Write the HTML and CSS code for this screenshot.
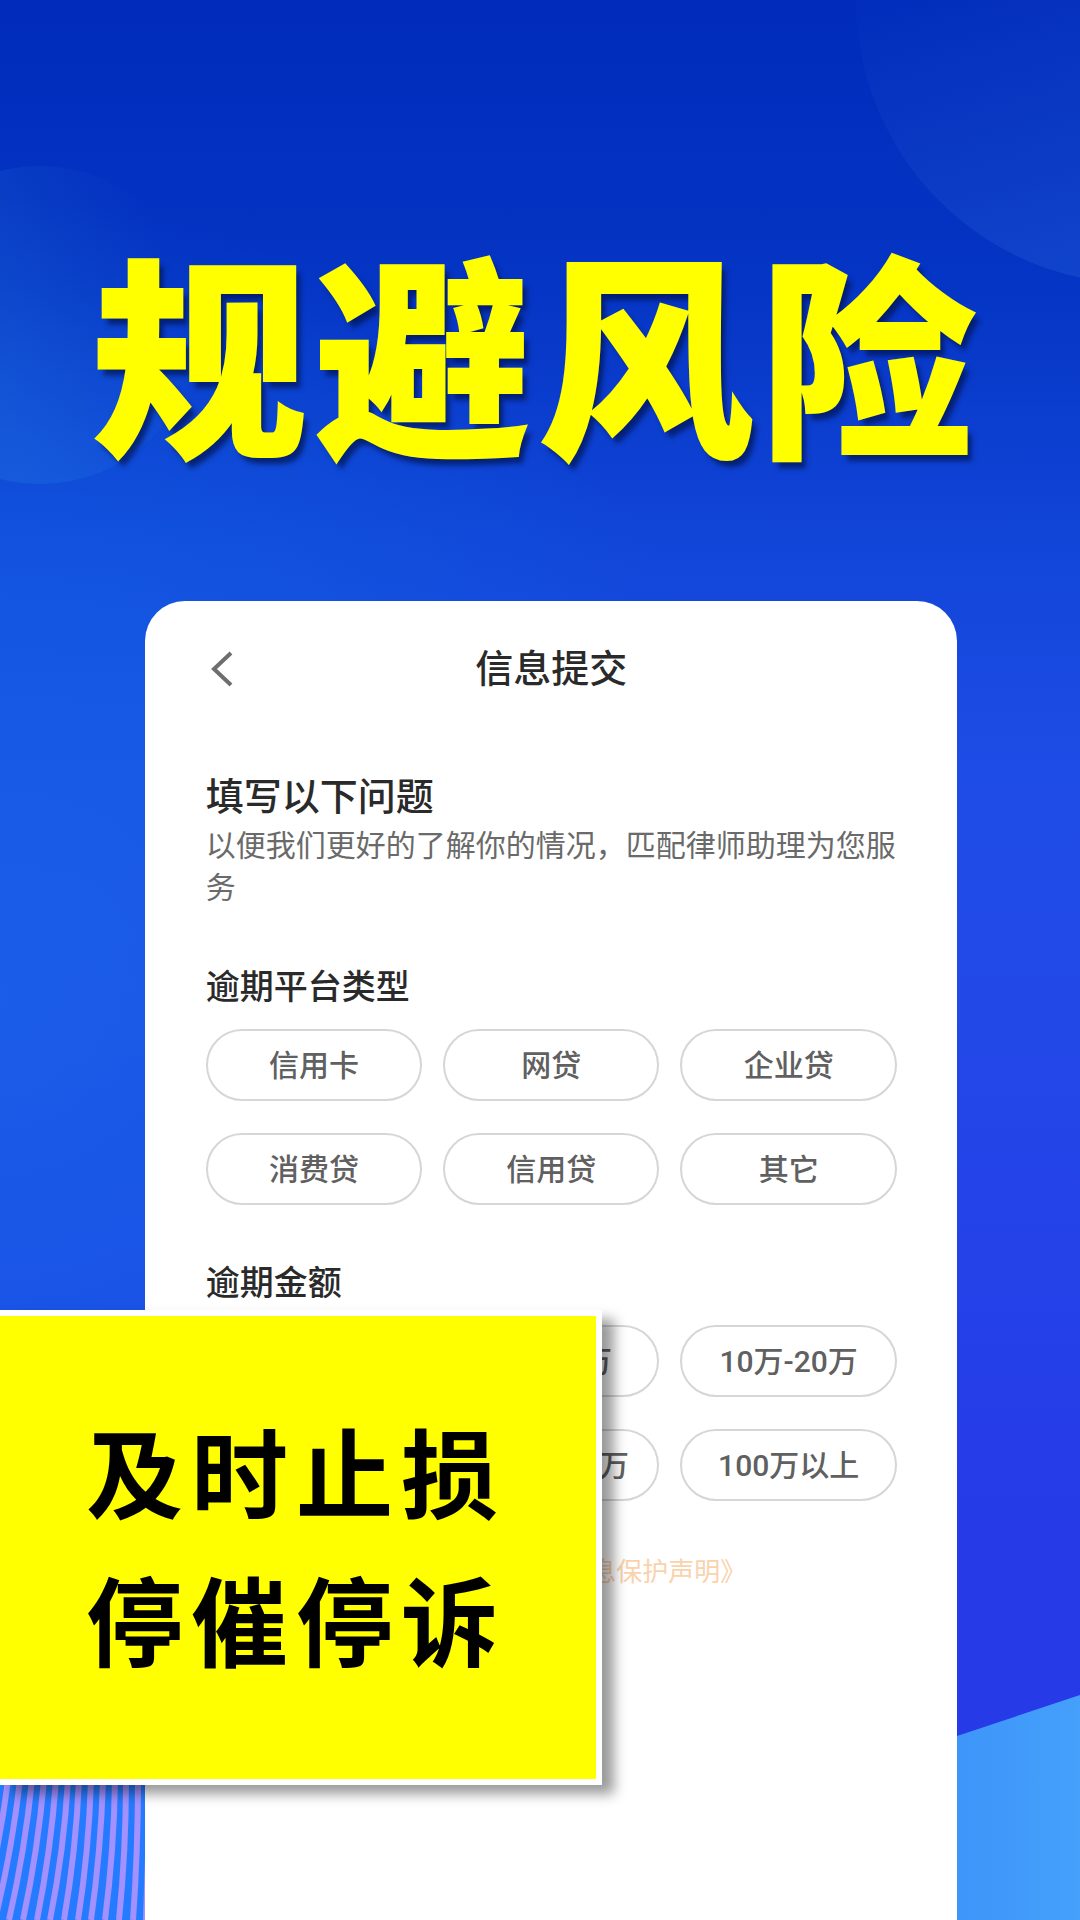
FILE: index.html
```html
<!DOCTYPE html>
<html lang="zh-CN">
<head>
	<meta charset="utf-8">
	<meta name="viewport" content="width=device-width, initial-scale=1">
	<title>规避风险</title>
	<link rel="stylesheet" href="styles.css">
</head>

<body>
<main class="poster">
	<!-- Background shapes -->
	<svg class="backdrop" viewBox="0 0 1080 1920" preserveAspectRatio="xMidYMax slice" aria-hidden="true">
		<defs>
			<linearGradient id="base" x1="0" y1="0" x2="0" y2="1">
				<stop offset="0" stop-color="#002bbb"/>
				<stop offset="0.15" stop-color="#0535c4"/>
				<stop offset="0.28" stop-color="#1145d8"/>
				<stop offset="0.4" stop-color="#1e4ce6"/>
				<stop offset="0.5" stop-color="#224ae8"/>
				<stop offset="0.8" stop-color="#263ae8"/>
				<stop offset="1" stop-color="#263ae8"/>
			</linearGradient>
			<radialGradient id="glow" gradientUnits="userSpaceOnUse" cx="0" cy="1000" r="800">
				<stop offset="0" stop-color="#1a5ee8" stop-opacity="0.9"/>
				<stop offset="0.5" stop-color="#1260e4" stop-opacity="0.55"/>
				<stop offset="1" stop-color="#0f60e0" stop-opacity="0"/>
			</radialGradient>
			<linearGradient id="left-ball" x1="0.3" y1="0.5" x2="0.9" y2="0.3">
				<stop offset="0" stop-color="#3aa0e8" stop-opacity="0.16"/>
				<stop offset="1" stop-color="#3aa0e8" stop-opacity="0"/>
			</linearGradient>
			<linearGradient id="right-ball" x1="0.2" y1="0.4" x2="0.5" y2="1">
				<stop offset="0" stop-color="#5a90f0" stop-opacity="0.02"/>
				<stop offset="1" stop-color="#4a90f0" stop-opacity="0.18"/>
			</linearGradient>
			<linearGradient id="corner" x1="0" y1="0" x2="1" y2="0">
				<stop offset="0" stop-color="#3b90f8"/>
				<stop offset="1" stop-color="#44a0fb"/>
			</linearGradient>
		</defs>
		<rect width="1080" height="1920" fill="url(#base)"/>
		<rect width="1080" height="1920" fill="url(#glow)"/>
		<circle cx="40" cy="325" r="159" fill="url(#left-ball)"/>
		<circle cx="1140" cy="0" r="284" fill="url(#right-ball)"/>
		<path d="M900 1755L1080 1695V1920H900Z" fill="url(#corner)"/>
		<rect y="1700" width="160" height="220" fill="#257bff"/>
		<g fill="none" stroke="#a291ff" stroke-width="6">
			<path d="M149 1780Q149 1850 146 1920"/>
			<path d="M138 1780Q138 1850 133 1920"/>
			<path d="M126 1780Q126 1850 119 1920"/>
			<path d="M115 1780Q114 1850 105 1920"/>
			<path d="M103 1780Q101 1850 91 1920"/>
			<path d="M91 1780Q89 1850 78 1920"/>
			<path d="M79 1780Q76 1850 64 1920"/>
			<path d="M68 1780Q64 1850 50 1920"/>
			<path d="M56 1780Q51 1850 37 1920"/>
			<path d="M44 1780Q38 1850 23 1920"/>
			<path d="M32 1780Q25 1850 9 1920"/>
			<path d="M20 1780Q12 1850 -5 1920"/>
			<path d="M8 1780Q-1 1850 -19 1920"/>
		</g>
	</svg>

	<h1 class="headline">规避风险</h1>

	<!-- Form screen -->
	<section class="screen">
		<header class="screen-bar">
			<button class="back" type="button" aria-label="返回">
				<svg viewBox="0 0 24 36" width="24" height="36"><path d="M21 2L4 18L21 34" fill="none" stroke="#6e6e6e" stroke-width="4"/></svg>
			</button>
			<h2 class="screen-title">信息提交</h2>
		</header>

		<h3 class="question-title">填写以下问题</h3>
		<p class="question-text">以便我们更好的了解你的情况，匹配律师助理为您服务</p>

		<h4 class="group-title">逾期平台类型</h4>
		<div class="options">
			<button type="button">信用卡</button>
			<button type="button">网贷</button>
			<button type="button">企业贷</button>
			<button type="button">消费贷</button>
			<button type="button">信用贷</button>
			<button type="button">其它</button>
		</div>

		<h4 class="group-title">逾期金额</h4>
		<div class="options">
			<button type="button">5万以下</button>
			<button type="button">5万-10万</button>
			<button type="button">10万-20万</button>
			<button type="button">20万-50万</button>
			<button type="button">50万-100万</button>
			<button type="button">100万以上</button>
		</div>

		<p class="agreement">阅读并同意<a href="#privacy">《个人信息保护声明》</a></p>
	</section>

	<!-- Yellow banner over the screen -->
	<aside class="banner">
		<p>及时止损</p>
		<p>停催停诉</p>
	</aside>
</main>
</body>
</html>
```
FILE: styles.css
```css
* {
	box-sizing: border-box;
}

body, h1, h2, h3, h4, p {
	margin: 0;
}

body {
	font-family: Roboto, "Noto Sans CJK SC", sans-serif;
	color: #2a2a2a;
}

.poster {
	position: relative;
	display: flex;
	flex-direction: column;
	min-height: 100vh;
	overflow: hidden;
	background: #2049e6;
}

.backdrop {
	position: absolute;
	top: 0;
	left: 0;
	width: 100%;
	height: 100%;
}

.headline {
	position: relative;
	padding: 188px 4px 93px 0;
	font-family: "Noto Sans CJK SC", sans-serif;
	font-size: 215px;
	font-weight: 900;
	line-height: 320px;
	letter-spacing: 8px;
	text-align: center;
	white-space: nowrap;
	color: #ff0;
	-webkit-text-stroke: 2px #ff0;
	text-shadow: 5px 7px 5px rgba(0, 20, 80, 0.7);
}

/* form screen */
.screen {
	position: relative;
	flex: 1;
	width: 75.2%;
	margin-left: 13.4%;
	padding: 40px 60px 0 61px;
	border-radius: 40px 40px 0 0;
	background: #fff;
}

.screen-bar {
	display: grid;
	grid-template-columns: 60px 1fr 60px;
	align-items: center;
	height: 56px;
}

.back {
	display: flex;
	padding: 0 4px;
	border: 0;
	background: none;
}

.screen-title {
	font-size: 38px;
	font-weight: 500;
	line-height: 56px;
	text-align: center;
}

.question-title {
	margin-top: 72px;
	font-size: 38px;
	font-weight: 500;
	line-height: 56px;
}

.question-text {
	font-size: 30px;
	font-weight: 400;
	line-height: 42px;
	color: #6a6a6a;
}

.group-title {
	margin-top: 52px;
	font-size: 34px;
	font-weight: 500;
	line-height: 52px;
}

.options {
	display: grid;
	grid-template-columns: repeat(3, 1fr);
	gap: 32px 21px;
	margin-top: 16px;
}

.options button {
	height: 72px;
	padding: 0 0 4px;
	border: 2px solid #d6d6d6;
	border-radius: 36px;
	background: #fff;
	font-family: inherit;
	font-size: 30px;
	font-weight: 500;
	white-space: nowrap;
	color: #606060;
}

.agreement {
	margin-top: 52px;
	font-size: 26px;
	font-weight: 400;
	line-height: 38px;
	text-align: center;
	color: #888;
}

.agreement a {
	color: #fad2ac;
	text-decoration: none;
}

/* banner */
.banner {
	position: absolute;
	top: 1310px;
	left: 0;
	width: 602px;
	padding: 79px 0 88px 86px;
	border: solid #fff;
	border-width: 6px 6px 6px 0;
	background: #ff0;
	box-shadow: 12px 9px 12px rgba(0, 0, 0, 0.4);
}

.banner p {
	font-family: "Noto Sans CJK SC", sans-serif;
	font-size: 97px;
	font-weight: 700;
	line-height: 148px;
	letter-spacing: 8px;
	color: #000;
}
```
